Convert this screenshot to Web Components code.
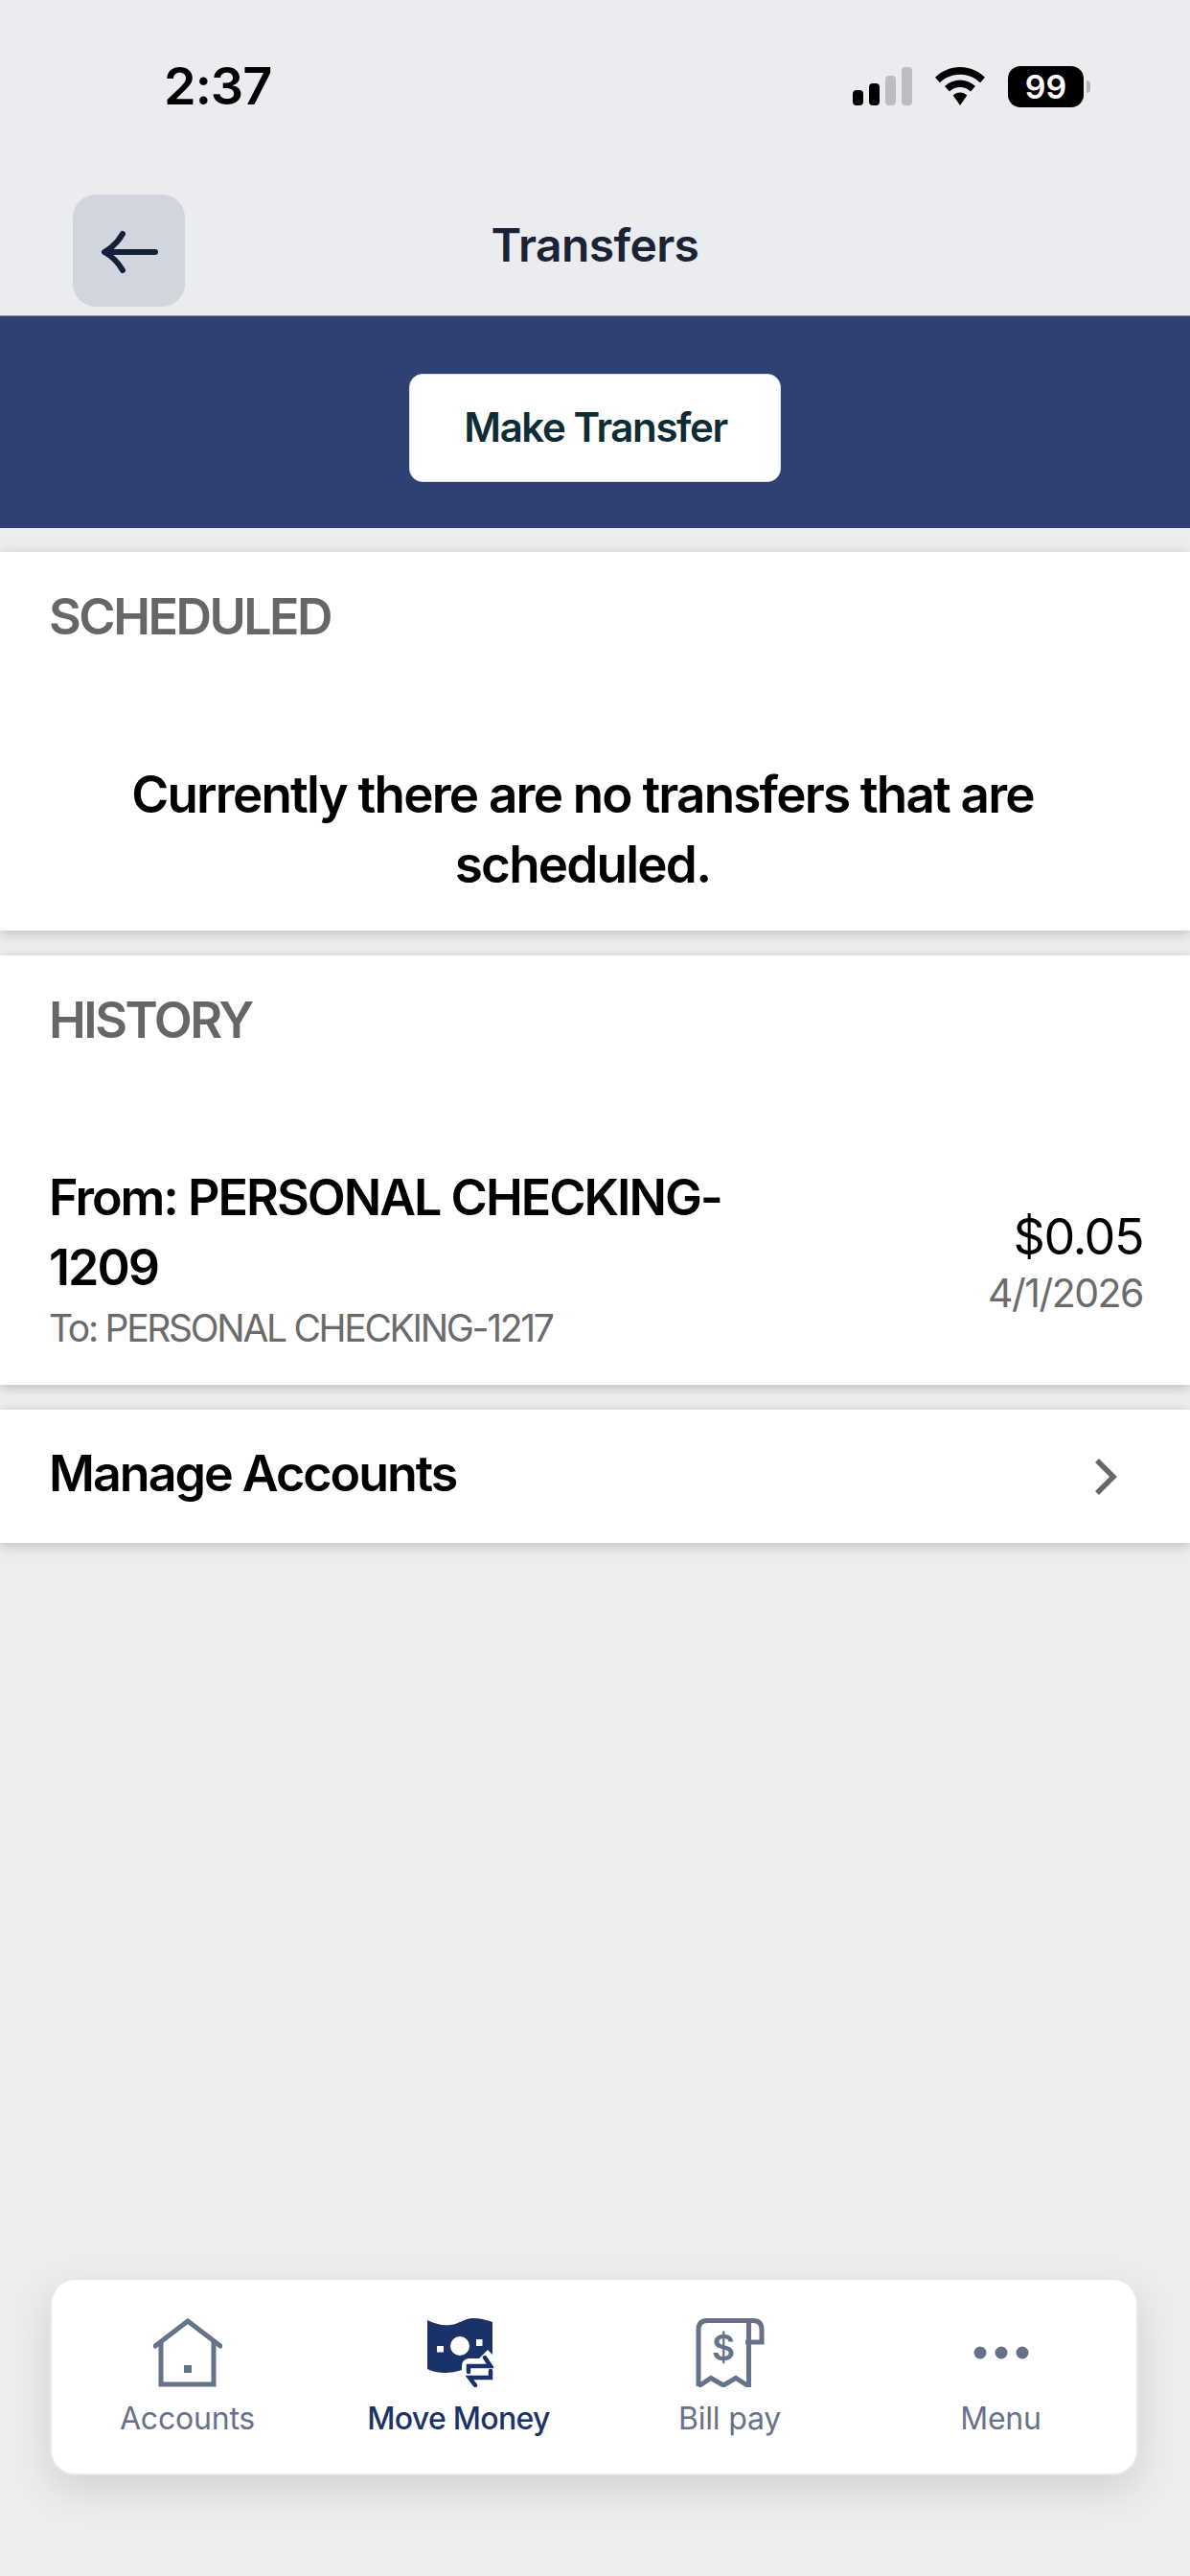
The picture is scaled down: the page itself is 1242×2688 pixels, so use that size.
<!DOCTYPE html>
<html lang="en">
<head>
<meta charset="utf-8">
<title>Transfers</title>
<style>
  html, body { margin: 0; padding: 0; }
  body { width: 1242px; height: 2688px; overflow: hidden; font-family: Inter, "Noto Sans", sans-serif; }
</style>
</head>
<body>
<transfers-screen>
  <status-bar time="2:37" battery="99"></status-bar>
  <top-nav title="Transfers"></top-nav>
  <action-band label="Make Transfer"></action-band>
  <section-card heading="SCHEDULED">
    <empty-note>Currently there are no transfers that are scheduled.</empty-note>
  </section-card>
  <section-card heading="HISTORY">
    <transfer-row from="From: PERSONAL CHECKING-1209" to="To: PERSONAL CHECKING-1217" amount="$0.05" date="4/1/2026"></transfer-row>
  </section-card>
  <link-row label="Manage Accounts"></link-row>
  <tab-bar slot="tabs">
    <tab-item label="Accounts">
      <svg viewBox="0 0 72 72" width="72" height="72" fill="none" stroke="#66728a" stroke-width="5">
        <path d="M2 29 36 3 70 29" stroke-linecap="round" stroke-linejoin="miter"/>
        <path d="M8 25V69H63V25"/>
        <rect x="32" y="49" width="8" height="8" fill="#66728a" stroke="none"/>
      </svg>
    </tab-item>
    <tab-item label="Move Money" active>
      <svg viewBox="0 0 72 72" width="72" height="72">
        <g transform="translate(3 0)">
          <path fill="#1b3268" d="M0 2C8 6 16 8 24 7 34 6 38 0 48 0 56 0 62 2 68 4V54C56 50 48 50 36 54 24 58 10 58 0 53Z"/>
          <circle cx="34" cy="29" r="10" fill="#fff"/>
          <rect x="10" y="29" width="7" height="6.500" fill="#fff"/>
          <rect x="51" y="22" width="6.500" height="7" fill="#fff"/>
          <path fill="#fff" d="M36 50Q36 43 43 42H54L63 33 70 40V72H36Z"/>
          <g fill="none" stroke="#1b3268" stroke-width="4.500" stroke-linecap="round" stroke-linejoin="miter">
            <path d="M43 56V50H66L60 41"/>
            <path d="M66 55V62H44L50 70"/>
          </g>
        </g>
      </svg>
    </tab-item>
    <tab-item label="Bill pay">
      <svg viewBox="0 0 72 72" width="72" height="72" fill="none" stroke="#66728a" stroke-width="5">
        <path d="M3 71V12Q3 2.500 12 2.500H60Q69 2.500 69 12V25H52"/>
        <path d="M55.500 2.500V71L42 62.500 29 70 16 62.500 3 71"/>
        <text x="29" y="44" text-anchor="middle" font-family="Inter, sans-serif" font-size="37" font-weight="600" fill="#66728a" stroke="none">$</text>
      </svg>
    </tab-item>
    <tab-item label="Menu">
      <svg viewBox="0 0 72 72" width="72" height="72" fill="#66728a">
        <circle cx="14" cy="36" r="6.500"/><circle cx="36" cy="36" r="6.500"/><circle cx="58" cy="36" r="6.500"/>
      </svg>
    </tab-item>
  </tab-bar>
</transfers-screen>

<script>
class TransfersScreen extends HTMLElement {
  constructor() {
    super();
    this.attachShadow({ mode: 'open' });
    this.shadowRoot.innerHTML = `
      <style>
        :host {
          display: flex;
          flex-direction: column;
          width: 1242px;
          height: 2688px;
          background: #ededee;
          color: #000;
        }
        #tabs { margin-top: auto; padding: 0 54px 105px 52px; }
      </style>
      <slot></slot>
      <div id="tabs"><slot name="tabs"></slot></div>
    `;
  }
}

class StatusBar extends HTMLElement {
  constructor() {
    super();
    this.attachShadow({ mode: 'open' });
    this.shadowRoot.innerHTML = `
      <style>
        :host {
          display: flex;
          align-items: center;
          justify-content: space-between;
          height: 180px;
          padding: 0 104px 0 171px;
          box-sizing: border-box;
          background: #ebecf0;
        }
        #time { font: 600 54px/60px Inter, sans-serif; letter-spacing: -1px; color: #000; }
        #icons { display: flex; align-items: center; gap: 24px; }
        #battery { display: flex; align-items: center; gap: 3px; }
        #cell {
          width: 79px; height: 43px; border-radius: 13px; background: #000; color: #fff;
          font: 600 34px/43px Inter, sans-serif; text-align: center;
        }
        #nub { width: 4px; height: 13px; border-radius: 0 4px 4px 0; background: #b5b6b9; }
      </style>
      <div id="time">${this.getAttribute('time')}</div>
      <div id="icons">
        <svg width="62" height="40" viewBox="0 0 62 40">
          <rect x="0" y="24" width="11" height="16" rx="4"/>
          <rect x="17" y="17" width="11" height="23" rx="4"/>
          <rect x="34" y="9" width="11" height="31" rx="4" fill="#bcbdc0"/>
          <rect x="51" y="0" width="11" height="40" rx="4" fill="#bcbdc0"/>
        </svg>
        <svg width="52" height="40" viewBox="0 0 52 40">
          <path d="M26 0C35.500 0 44.500 3.600 52 10.800L47 16.200C41.300 10.800 34 7.800 26 7.800S10.700 10.800 5 16.200L0 10.800C7.500 3.600 16.500 0 26 0Z"/>
          <path d="M26 13.500C32 13.500 37.600 15.800 42 20L37 25.400C33.900 22.500 30.100 21 26 21S18.100 22.500 15 25.400L10 20C14.400 15.800 20 13.500 26 13.500Z"/>
          <path d="M26 26.500C28.800 26.500 31.300 27.500 33.300 29.400L26 40 18.700 29.400C20.700 27.500 23.200 26.500 26 26.500Z"/>
        </svg>
        <div id="battery"><div id="cell">${this.getAttribute('battery')}</div><div id="nub"></div></div>
      </div>
    `;
  }
}

class TopNav extends HTMLElement {
  constructor() {
    super();
    this.attachShadow({ mode: 'open' });
    this.shadowRoot.innerHTML = `
      <style>
        :host {
          display: grid;
          grid-template-columns: 117px 1fr 117px;
          align-items: start;
          height: 149px;
          padding: 23px 76px 0;
          box-sizing: border-box;
          background: #ebecf0;
        }
        #back {
          width: 117px; height: 117px; border-radius: 24px; background: #d1d5de;
          display: flex; align-items: center; justify-content: center;
        }
        #back svg { margin-left: 1px; margin-top: 2px; }
        h1 {
          margin: 0; padding-top: 24px; text-align: center;
          font: 600 48px/58px Inter, sans-serif; letter-spacing: -0.6px; color: #1a2236;
        }
      </style>
      <div id="back">
        <svg width="60" height="46" viewBox="0 0 60 46" fill="none" stroke="#161f38" stroke-width="6" stroke-linecap="round" stroke-linejoin="round">
          <path d="M5 23H57"/>
          <path d="M23 4C19 11 13 18 4 23 13 28 19 35 23 42"/>
        </svg>
      </div>
      <h1>${this.getAttribute('title')}</h1>
    `;
  }
}

class ActionBand extends HTMLElement {
  constructor() {
    super();
    this.attachShadow({ mode: 'open' });
    this.shadowRoot.innerHTML = `
      <style>
        :host {
          display: flex;
          justify-content: center;
          align-items: center;
          height: 222px;
          padding-top: 11px;
          background: #2f4172;
          border-top: 1px solid #8d98b4;
          box-sizing: border-box;
          margin-bottom: 25px;
        }
        button {
          width: 388px; height: 113px; border: 1px solid #dfe2ea; border-radius: 14px; background: #fff;
          font: 600 42px/50px Inter, sans-serif; letter-spacing: -1.4px; color: #0f2b33; padding: 0 0 0 1px;
        }
      </style>
      <button>${this.getAttribute('label')}</button>
    `;
  }
}

class SectionCard extends HTMLElement {
  constructor() {
    super();
    this.attachShadow({ mode: 'open' });
    this.shadowRoot.innerHTML = `
      <style>
        :host {
          display: block;
          background: #fff;
          margin-bottom: 26px;
          padding: 38px 51px 0;
          box-shadow: 0 3px 12px rgba(0,0,0,.2);
        }
        h2 {
          margin: 0;
          font: 600 52px/60px Inter, sans-serif;
          letter-spacing: -2.5px;
          color: #666;
        }
      </style>
      <h2>${this.getAttribute('heading')}</h2>
      <slot></slot>
    `;
  }
}

class EmptyNote extends HTMLElement {
  constructor() {
    super();
    this.attachShadow({ mode: 'open' });
    this.shadowRoot.innerHTML = `
      <style>
        :host {
          display: block;
          padding: 119px 76px 32px 50px;
          text-align: center;
          font: 600 53px/73px Inter, sans-serif;
          letter-spacing: -1.8px;
          color: #000;
        }
      </style>
      <slot></slot>
    `;
  }
}

class TransferRow extends HTMLElement {
  constructor() {
    super();
    this.attachShadow({ mode: 'open' });
    this.shadowRoot.innerHTML = `
      <style>
        :host {
          display: flex;
          justify-content: space-between;
          padding: 118px 0 35px;
        }
        #from {
          width: 720px;
          font: 600 52px/73px Inter, sans-serif;
          letter-spacing: -2px;
          color: #000;
        }
        #to {
          padding-top: 3px;
          font: 400 39px/48px Inter, sans-serif;
          letter-spacing: -2.3px;
          color: #6b6b6b;
        }
        #right { text-align: right; padding-top: 45px; margin-right: -2px; }
        #amount { font: 400 52px/66px Inter, sans-serif; letter-spacing: -1.5px; color: #000; }
        #date { font: 400 41px/50px Inter, sans-serif; letter-spacing: -1.5px; color: #6b6b6b; }
      </style>
      <div>
        <div id="from">${this.getAttribute('from')}</div>
        <div id="to">${this.getAttribute('to')}</div>
      </div>
      <div id="right">
        <div id="amount">${this.getAttribute('amount')}</div>
        <div id="date">${this.getAttribute('date')}</div>
      </div>
    `;
  }
}

class LinkRow extends HTMLElement {
  constructor() {
    super();
    this.attachShadow({ mode: 'open' });
    this.shadowRoot.innerHTML = `
      <style>
        :host {
          display: flex;
          align-items: center;
          justify-content: space-between;
          height: 139px;
          padding: 0 76px 0 51px;
          background: #fff;
          box-shadow: 0 3px 12px rgba(0,0,0,.2);
          font: 600 52px/60px Inter, sans-serif;
          letter-spacing: -2px;
          color: #000;
        }
        span { padding-bottom: 5px; }
      </style>
      <span>${this.getAttribute('label')}</span>
      <svg width="24" height="38" viewBox="0 0 24 38" fill="none" stroke="#666" stroke-width="5.500">
        <path d="M3 2 20 19 3 36"/>
      </svg>
    `;
  }
}

class TabBar extends HTMLElement {
  constructor() {
    super();
    this.attachShadow({ mode: 'open' });
    this.shadowRoot.innerHTML = `
      <style>
        :host {
          display: grid;
          grid-template-columns: repeat(4, 1fr);
          height: 204px;
          box-sizing: border-box;
          background: #fff;
          border: 2px solid #e7e8ed;
          border-top-width: 0;
          border-radius: 26px;
          box-shadow: 0 14px 40px rgba(0,0,0,.12);
        }
      </style>
      <slot></slot>
    `;
  }
}

class TabItem extends HTMLElement {
  constructor() {
    super();
    this.attachShadow({ mode: 'open' });
    this.shadowRoot.innerHTML = `
      <style>
        :host {
          display: flex;
          flex-direction: column;
          align-items: center;
          padding-top: 40px;
          font: 400 32px/40px Inter, sans-serif;
          letter-spacing: -0.2px;
          color: #66728a;
        }
        :host([active]) { color: #1b3268; font-weight: 500; letter-spacing: -0.7px; }
        #icon { height: 72px; }
        #label { margin-top: 13px; }
      </style>
      <div id="icon"><slot></slot></div>
      <div id="label">${this.getAttribute('label')}</div>
    `;
  }
}

customElements.define('transfers-screen', TransfersScreen);
customElements.define('status-bar', StatusBar);
customElements.define('top-nav', TopNav);
customElements.define('action-band', ActionBand);
customElements.define('section-card', SectionCard);
customElements.define('empty-note', EmptyNote);
customElements.define('transfer-row', TransferRow);
customElements.define('link-row', LinkRow);
customElements.define('tab-bar', TabBar);
customElements.define('tab-item', TabItem);
</script>
</body>
</html>
